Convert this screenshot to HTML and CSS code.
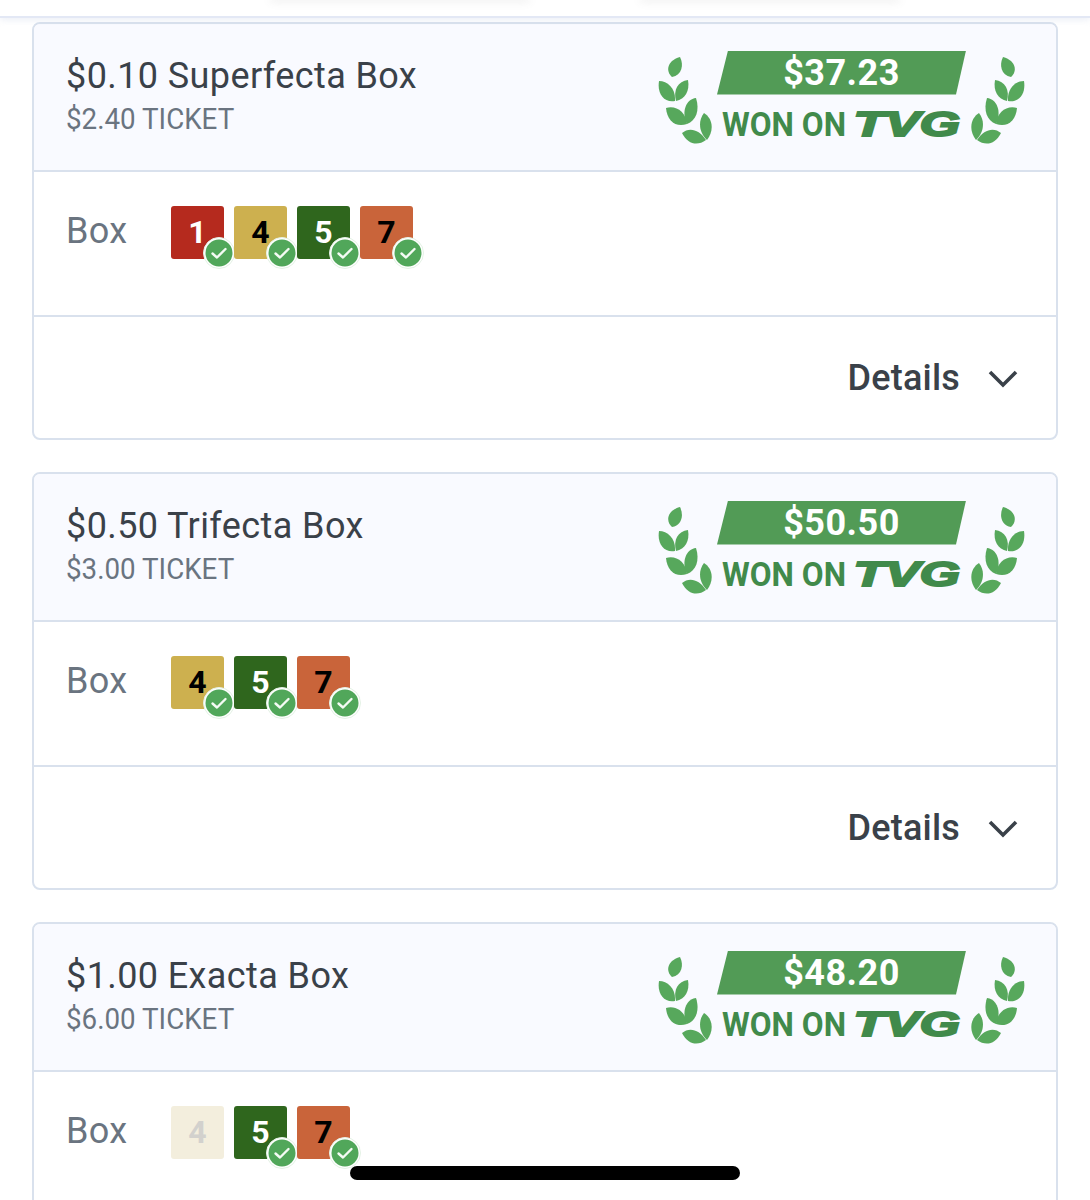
FILE: index.html
```html
<!DOCTYPE html>
<html lang="en">
  <head>
    <meta charset="UTF-8" />
    <title>Wagers</title>
    <link rel="stylesheet" href="styles.css">
  </head>
  <body>
    <svg class="defs" width="0" height="0" aria-hidden="true">
      <symbol id="laurel" viewBox="7 4 54 90">
        <path d="M21 27C15 22 15 11 29 7C33 15 31 25 21 27Z" />
        <path d="M8 31C17 31 25 39 24 51C13 53 6 44 8 31Z" />
        <path d="M37 30C27 31 22 40 25 51C34 49 39 41 37 30Z" />
        <path d="M15 58C25 55 35 62 36 74C25 78 16 71 15 58Z" />
        <path d="M45 48C35 49 30 62 36 74C45 71 49 60 45 48Z" />
        <path d="M31 83C38 77 48 79 55 90C47 96 37 95 31 83Z" />
        <path d="M53 63C61 68 64 79 56 90C49 84 46 72 53 63Z" />
      </symbol>
      <symbol id="check" viewBox="0 0 32 32">
        <circle cx="16" cy="16" r="15.5" fill="#fff" stroke="#e4f2e5" />
        <circle cx="16" cy="16" r="13.5" fill="#51a75a" />
        <path d="M9.5 16.5L14 20.5L22.5 12" fill="none" stroke="#f4fbf4" stroke-width="2.4" stroke-linecap="round" stroke-linejoin="round" />
      </symbol>
      <symbol id="chevron" viewBox="0 0 30 20">
        <path d="M2 3L15 16L28 3" fill="none" stroke="#3a4149" stroke-width="3.6" />
      </symbol>
    </svg>

    <div class="top-bar">
      <div class="top-tab top-tab-left"></div>
      <div class="top-tab top-tab-right"></div>
    </div>

    <div class="ticket-list">
      <div class="ticket">
        <div class="ticket-head">
          <div>
            <div class="ticket-title">$0.10 Superfecta Box</div>
            <div class="ticket-cost">$2.40 TICKET</div>
          </div>
          <div class="won">
            <svg class="laurel"><use href="#laurel" /></svg>
            <div class="won-mid">
              <div class="won-amount">$37.23</div>
              <div class="won-on">WON ON <span class="tvg">TVG</span></div>
            </div>
            <svg class="laurel laurel-right"><use href="#laurel" /></svg>
          </div>
        </div>
        <div class="ticket-body">
          <div class="body-label">Box</div>
          <div class="runners">
            <div class="runner red">1<svg class="tick"><use href="#check" /></svg></div>
            <div class="runner yellow">4<svg class="tick"><use href="#check" /></svg></div>
            <div class="runner green">5<svg class="tick"><use href="#check" /></svg></div>
            <div class="runner orange">7<svg class="tick"><use href="#check" /></svg></div>
          </div>
        </div>
        <div class="ticket-foot">
          <span class="details">Details</span>
          <svg class="chevron"><use href="#chevron" /></svg>
        </div>
      </div>

      <div class="ticket">
        <div class="ticket-head">
          <div>
            <div class="ticket-title">$0.50 Trifecta Box</div>
            <div class="ticket-cost">$3.00 TICKET</div>
          </div>
          <div class="won">
            <svg class="laurel"><use href="#laurel" /></svg>
            <div class="won-mid">
              <div class="won-amount">$50.50</div>
              <div class="won-on">WON ON <span class="tvg">TVG</span></div>
            </div>
            <svg class="laurel laurel-right"><use href="#laurel" /></svg>
          </div>
        </div>
        <div class="ticket-body">
          <div class="body-label">Box</div>
          <div class="runners">
            <div class="runner yellow">4<svg class="tick"><use href="#check" /></svg></div>
            <div class="runner green">5<svg class="tick"><use href="#check" /></svg></div>
            <div class="runner orange">7<svg class="tick"><use href="#check" /></svg></div>
          </div>
        </div>
        <div class="ticket-foot">
          <span class="details">Details</span>
          <svg class="chevron"><use href="#chevron" /></svg>
        </div>
      </div>

      <div class="ticket">
        <div class="ticket-head">
          <div>
            <div class="ticket-title">$1.00 Exacta Box</div>
            <div class="ticket-cost">$6.00 TICKET</div>
          </div>
          <div class="won">
            <svg class="laurel"><use href="#laurel" /></svg>
            <div class="won-mid">
              <div class="won-amount">$48.20</div>
              <div class="won-on">WON ON <span class="tvg">TVG</span></div>
            </div>
            <svg class="laurel laurel-right"><use href="#laurel" /></svg>
          </div>
        </div>
        <div class="ticket-body">
          <div class="body-label">Box</div>
          <div class="runners">
            <div class="runner faded">4</div>
            <div class="runner green">5<svg class="tick"><use href="#check" /></svg></div>
            <div class="runner orange">7<svg class="tick"><use href="#check" /></svg></div>
          </div>
        </div>
      </div>
    </div>

    <div class="home-bar"></div>
  </body>
</html>
```

FILE: styles.css
```css
html,
body {
  height: 1200px;
  overflow: hidden;
}

body {
  margin: 0;
  background: #fff;
  font-family: Roboto, "Liberation Sans", sans-serif;
  color: #3a4149;
}

.defs {
  display: block;
  height: 0;
}

.top-bar {
  position: relative;
  height: 16px;
  background: #fff;
  border-bottom: 2px solid #e3e8f5;
  box-shadow: 0 2px 6px rgba(200, 208, 230, 0.35);
}

.top-tab {
  position: absolute;
  top: -6px;
  height: 6px;
  border-radius: 4px;
  box-shadow: 0 2px 8px rgba(120, 120, 120, 0.12);
}
.top-tab-left {
  left: 270px;
  width: 260px;
}
.top-tab-right {
  left: 640px;
  width: 260px;
}

.ticket-list {
  display: flex;
  flex-direction: column;
  gap: 32px;
  padding: 4px 32px 0;
}

.ticket {
  border: 2px solid #d9e1ed;
  border-radius: 8px;
  background: #fff;
  flex-shrink: 0;
}

.ticket-head {
  display: flex;
  justify-content: space-between;
  align-items: center;
  box-sizing: border-box;
  height: 148px;
  padding: 0 31px 0 32px;
  background: #f9faff;
  border-bottom: 2px solid #d9e1ed;
  border-radius: 6px 6px 0 0;
}

.ticket-title {
  font-size: 36px;
  line-height: 42px;
  letter-spacing: 0.4px;
}

.ticket-cost {
  margin-top: 2px;
  font-size: 30px;
  line-height: 40px;
  color: #6a7480;
  transform: scaleX(0.925);
  transform-origin: left center;
}

.won {
  display: flex;
  align-items: flex-end;
  gap: 5px;
}

.won-mid {
  display: flex;
  flex-direction: column;
  align-items: center;
  width: 249px;
}

.won-amount {
  width: 100%;
  height: 44px;
  text-align: center;
  line-height: 44px;
  font-size: 36px;
  font-weight: 700;
  letter-spacing: 0.5px;
  color: #fff;
  background: #529b56;
  clip-path: polygon(11px 0, 100% 0, 239px 100%, 0 100%);
}

.won-on {
  align-self: flex-start;
  margin: 11px 0 1px 5px;
  white-space: nowrap;
  font-size: 33px;
  line-height: 36px;
  font-weight: 700;
  color: #418a4b;
  transform: scaleX(0.96);
  transform-origin: left center;
}

.tvg {
  display: inline-block;
  font-family: "Liberation Sans", sans-serif;
  font-size: 35px;
  font-weight: 700;
  font-style: italic;
  -webkit-text-stroke: 2px #418a4b;
  transform: scaleX(1.54);
  transform-origin: left center;
}

.laurel {
  display: block;
  width: 54px;
  height: 90px;
  fill: #57a85c;
}
.laurel-right {
  transform: scaleX(-1);
}

.ticket-body {
  display: flex;
  align-items: flex-start;
  box-sizing: border-box;
  height: 145px;
  padding: 34px 0 0 32px;
  border-bottom: 2px solid #d9e1ed;
}

.body-label {
  width: 105px;
  margin-top: 4px;
  font-size: 36px;
  line-height: 42px;
  letter-spacing: 0.3px;
  color: #6a7480;
}

.runners {
  display: flex;
  gap: 10px;
}

.runner {
  position: relative;
  width: 53px;
  height: 53px;
  border-radius: 3px;
  text-align: center;
  font-size: 32px;
  font-weight: 700;
  line-height: 53px;
}
.red {
  background: #b52a1e;
  color: #fff;
}
.yellow {
  background: #cdb04f;
  color: #000;
}
.green {
  background: #2f661d;
  color: #fff;
}
.orange {
  background: #c9643a;
  color: #000;
}
.faded {
  background: #f3eedd;
  color: #d2d1cd;
}

.tick {
  position: absolute;
  right: -11px;
  bottom: -10px;
  width: 32px;
  height: 32px;
}

.ticket-foot {
  display: flex;
  justify-content: flex-end;
  align-items: center;
  height: 121px;
  padding-right: 38px;
}

.details {
  font-size: 36px;
  font-weight: 500;
  letter-spacing: 0.2px;
}

.chevron {
  width: 30px;
  height: 20px;
  margin-left: 28px;
  margin-top: 2px;
}

.home-bar {
  position: absolute;
  left: 350px;
  top: 1166px;
  width: 390px;
  height: 14px;
  border-radius: 7px;
  background: #000;
}
```
